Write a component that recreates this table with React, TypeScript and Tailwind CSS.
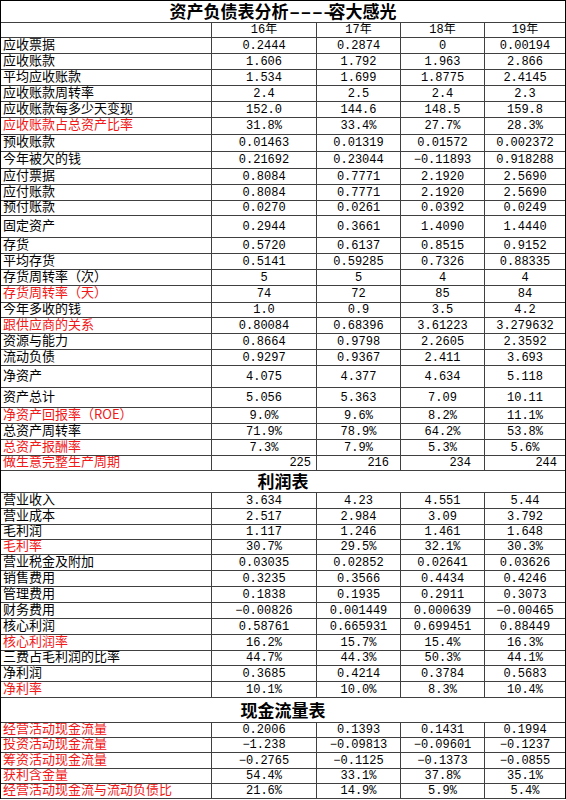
import React from 'react';

type Row = { label: string; values: string[]; h: number; red?: boolean; right?: boolean };

const H: Record<number, string> = {
  15: 'h-[15px]',
  16: 'h-[16px]',
  17: 'h-[17px]',
  20: 'h-[20px]',
  22: 'h-[22px]',
  25: 'h-[25px]',
};

const valueCols = ['w-[105px]', 'w-[84px]', 'w-[84px]', 'w-[80px]'];
const rightPads = ['pr-[5px]', 'pr-[11px]', 'pr-[13px]', 'pr-[8px]'];

const balance: Row[] = [
  { label: '应收票据', values: ['0.2444', '0.2874', '0', '0.00194'], h: 16 },
  { label: '应收账款', values: ['1.606', '1.792', '1.963', '2.866'], h: 16 },
  { label: '平均应收账款', values: ['1.534', '1.699', '1.8775', '2.4145'], h: 16 },
  { label: '应收账款周转率', values: ['2.4', '2.5', '2.4', '2.3'], h: 16 },
  { label: '应收账款每多少天变现', values: ['152.0', '144.6', '148.5', '159.8'], h: 16 },
  { label: '应收账款占总资产比率', values: ['31.8%', '33.4%', '27.7%', '28.3%'], h: 17, red: true },
  { label: '预收账款', values: ['0.01463', '0.01319', '0.01572', '0.002372'], h: 17 },
  { label: '今年被欠的钱', values: ['0.21692', '0.23044', '−0.11893', '0.918288'], h: 17 },
  { label: '应付票据', values: ['0.8084', '0.7771', '2.1920', '2.5690'], h: 16 },
  { label: '应付账款', values: ['0.8084', '0.7771', '2.1920', '2.5690'], h: 16 },
  { label: '预付账款', values: ['0.0270', '0.0261', '0.0392', '0.0249'], h: 15 },
  { label: '固定资产', values: ['0.2944', '0.3661', '1.4090', '1.4440'], h: 22 },
  { label: '存货', values: ['0.5720', '0.6137', '0.8515', '0.9152'], h: 16 },
  { label: '平均存货', values: ['0.5141', '0.59285', '0.7326', '0.88335'], h: 16 },
  { label: '存货周转率（次）', values: ['5', '5', '4', '4'], h: 16 },
  { label: '存货周转率（天）', values: ['74', '72', '85', '84'], h: 17, red: true },
  { label: '今年多收的钱', values: ['1.0', '0.9', '3.5', '4.2'], h: 15 },
  { label: '跟供应商的关系', values: ['0.80084', '0.68396', '3.61223', '3.279632'], h: 16, red: true },
  { label: '资源与能力', values: ['0.8664', '0.9798', '2.2605', '2.3592'], h: 16 },
  { label: '流动负债', values: ['0.9297', '0.9367', '2.411', '3.693'], h: 16 },
  { label: '净资产', values: ['4.075', '4.377', '4.634', '5.118'], h: 22 },
  { label: '资产总计', values: ['5.056', '5.363', '7.09', '10.11'], h: 20 },
  { label: '净资产回报率（ROE）', values: ['9.0%', '9.6%', '8.2%', '11.1%'], h: 16, red: true },
  { label: '总资产周转率', values: ['71.9%', '78.9%', '64.2%', '53.8%'], h: 16 },
  { label: '总资产报酬率', values: ['7.3%', '7.9%', '5.3%', '5.6%'], h: 16, red: true },
  { label: '做生意完整生产周期', values: ['225', '216', '234', '244'], h: 15, red: true, right: true },
];

const income: Row[] = [
  { label: '营业收入', values: ['3.634', '4.23', '4.551', '5.44'], h: 16 },
  { label: '营业成本', values: ['2.517', '2.984', '3.09', '3.792'], h: 16 },
  { label: '毛利润', values: ['1.117', '1.246', '1.461', '1.648'], h: 15 },
  { label: '毛利率', values: ['30.7%', '29.5%', '32.1%', '30.3%'], h: 15, red: true },
  { label: '营业税金及附加', values: ['0.03035', '0.02852', '0.02641', '0.03626'], h: 16 },
  { label: '销售费用', values: ['0.3235', '0.3566', '0.4434', '0.4246'], h: 16 },
  { label: '管理费用', values: ['0.1838', '0.1935', '0.2911', '0.3073'], h: 16 },
  { label: '财务费用', values: ['−0.00826', '0.001449', '0.000639', '−0.00465'], h: 16 },
  { label: '核心利润', values: ['0.58761', '0.665931', '0.699451', '0.88449'], h: 16 },
  { label: '核心利润率', values: ['16.2%', '15.7%', '15.4%', '16.3%'], h: 16, red: true },
  { label: '三费占毛利润的比率', values: ['44.7%', '44.3%', '50.3%', '44.1%'], h: 15 },
  { label: '净利润', values: ['0.3685', '0.4214', '0.3784', '0.5683'], h: 16 },
  { label: '净利率', values: ['10.1%', '10.0%', '8.3%', '10.4%'], h: 16, red: true },
];

const cash: Row[] = [
  { label: '经营活动现金流量', values: ['0.2006', '0.1393', '0.1431', '0.1994'], h: 15, red: true },
  { label: '投资活动现金流量', values: ['−1.238', '−0.09813', '−0.09601', '−0.1237'], h: 15, red: true },
  { label: '筹资活动现金流量', values: ['−0.2765', '−0.1125', '−0.1373', '−0.0855'], h: 16, red: true },
  { label: '获利含金量', values: ['54.4%', '33.1%', '37.8%', '35.1%'], h: 15, red: true },
  { label: '经营活动现金流与流动负债比', values: ['21.6%', '14.9%', '5.9%', '5.4%'], h: 15, red: true },
];

const cjk = "font-['Noto_Sans_CJK_SC',sans-serif]";
const mono = "font-['Liberation_Mono','Noto_Sans_CJK_SC',monospace]";

function DataRow({ row }: { row: Row }) {
  return (
    <div className={`flex border-b border-[#404040] ${H[row.h]}`}>
      <div
        className={`w-[211px] shrink-0 flex items-center pl-[2px] pb-[5px] border-r border-[#404040] overflow-hidden text-[13px] leading-[13px] whitespace-nowrap ${cjk} ${
          row.red ? 'text-[#f01818]' : 'text-black'
        }`}
      >
        {row.label}
      </div>
      {row.values.map((v, i) => (
        <div
          key={i}
          className={`${valueCols[i]} shrink-0 flex items-center overflow-hidden text-[12px] leading-[12px] text-black whitespace-nowrap ${mono} ${
            row.right ? `justify-end ${rightPads[i]}` : 'justify-center'
          } ${i < 3 ? 'border-r border-[#404040]' : ''}`}
        >
          {v}
        </div>
      ))}
    </div>
  );
}

function SectionTitle({ children, h }: { children: React.ReactNode; h: number }) {
  return (
    <div
      className={`flex items-center justify-center pb-[2px] border-b border-[#404040] text-[17px] font-bold leading-[17px] text-black ${cjk} ${H[h]}`}
    >
      {children}
    </div>
  );
}

export default function App() {
  return (
    <div className="w-[566px] bg-white">
      <div className="w-[566px] border-t border-l border-r border-black">
        <SectionTitle h={22}>
          资产负债表分析
          <span className="inline-block w-[40px]">
            <span className="inline-block origin-left scale-x-[1.8]">----</span>
          </span>
          容大感光
        </SectionTitle>
        <div className="flex h-[15px] border-b border-[#404040]">
          <div className="w-[211px] shrink-0 border-r border-[#404040]" />
          {['16年', '17年', '18年', '19年'].map((y, i) => (
            <div
              key={y}
              className={`${valueCols[i]} shrink-0 flex items-center justify-center text-[12px] leading-[12px] text-black ${mono} ${
                i < 3 ? 'border-r border-[#404040]' : ''
              }`}
            >
              {y}
            </div>
          ))}
        </div>
        {balance.map((r) => (
          <DataRow key={r.label} row={r} />
        ))}
        <SectionTitle h={22}>利润表</SectionTitle>
        {income.map((r) => (
          <DataRow key={r.label} row={r} />
        ))}
        <SectionTitle h={25}>现金流量表</SectionTitle>
        {cash.map((r) => (
          <DataRow key={r.label} row={r} />
        ))}
      </div>
    </div>
  );
}
